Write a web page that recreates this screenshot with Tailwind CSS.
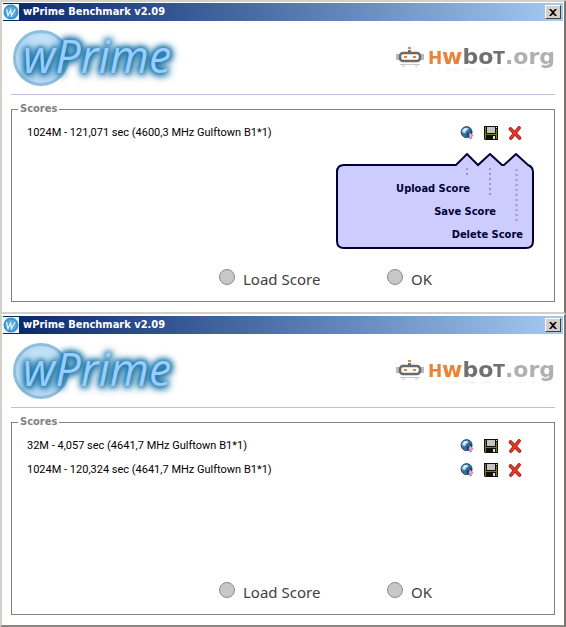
<!DOCTYPE html>
<html lang="en">
<head>
  <meta charset="UTF-8">
  <meta name="viewport" content="width=device-width, initial-scale=1.0">
  <title>wPrime Benchmark v2.09</title>
  <script src="https://cdn.jsdelivr.net/npm/@tailwindcss/browser@4"></script>
</head>
<body class="bg-white text-black font-['DejaVu_Sans_Condensed','DejaVu_Sans',sans-serif]">
  <!-- shared icons -->
  <svg class="hidden">
    <symbol id="app" viewBox="0 0 16 16">
      <rect width="16" height="16" fill="#eef6fc"/>
      <circle cx="8" cy="8" r="7.500" fill="#3f93c8"/>
      <circle cx="8" cy="8" r="5.500" fill="#5aa8d8"/>
      <path d="M3.500 5l1.500 6.500 2.700-5.500.8 5.500 3.700-6.500" fill="none" stroke="#d8efff" stroke-width="1.300"/>
    </symbol>
    <symbol id="close" viewBox="0 0 8 7">
      <path d="M0 0h2l2 2 2-2h2L5 3.500 8 7H6L4 5 2 7H0l3-3.500z" fill="#000"/>
    </symbol>
    <symbol id="robot" viewBox="0 0 28 24">
      <path d="M0 8h3v6H0zM25 8h3v6h-3z" fill="#b8b8b8"/>
      <path d="M12 4h3v3h-3z" fill="#707070"/>
      <path d="M12 1h3v2h-3z" fill="#e08a40"/>
      <rect x="4" y="7" width="20" height="8" rx="3" fill="#fff" stroke="#6a6a6a" stroke-width="2.500"/>
      <path d="M8 10h3v2H8zM17 10h3v2h-3z" fill="#f08028"/>
      <path d="M4 18h20v1H4z" fill="#c8c8c8"/>
      <path d="M6 19h3v2H6zM19 19h3v2h-3z" fill="#e2e2e2"/>
    </symbol>
    <symbol id="globe" viewBox="0 0 16 16">
      <circle cx="7.500" cy="7" r="6.300" fill="#2f6f9f" stroke="#24405c"/>
      <path d="M2 6c1-4 6-5 8-3-1 2-3 2-4 5-1 1-3 0-4-2z" fill="#a9d4ec"/>
      <path d="M4 4c1-1 3-2 4-1L5 6z" fill="#eef9ff"/>
      <path d="M8 9l5-4c1 3 0 6-2 8-2 0-4-2-3-4z" fill="#123a66"/>
      <path d="M11 7l4 4-1.500.5V14l-2 1-1.500-4z" fill="#e2a9d8" stroke="#8d4c86" stroke-width=".6"/>
    </symbol>
    <symbol id="disk" viewBox="0 0 14 14">
      <path d="M0 0h14v14H1l-1-1z" fill="#101008"/>
      <path d="M1 1h1v12H1zM12 3h1v10h-1zM2 8h10v1H2z" fill="#7c7c1c"/>
      <path d="M3 1h8v6H3z" fill="#c4c4c4"/>
      <path d="M12 1h1v1h-1z" fill="#eee"/>
      <path d="M9 10h2v3H9z" fill="#ddd"/>
    </symbol>
    <symbol id="cross" viewBox="0 0 14 14">
      <path d="M2.500 3L11.500 12M11 2L3 12" fill="none" stroke="#8e1208" stroke-width="3.600" stroke-linecap="round"/>
      <path d="M2.500 3L11.500 12M11 2L3 12" fill="none" stroke="#e8382a" stroke-width="2.200" stroke-linecap="round"/>
    </symbol>
  </svg>

  <main>
    <section class="border-2 border-[#d4d0c8] border-r-[#77756f]">
      <header class="mx-px mt-px flex h-[18px] items-center gap-1 bg-linear-to-r from-[#0a246a] to-[#a6caf0] pr-0.5">
        <svg class="size-4"><use href="#app"/></svg>
        <h2 class="grow text-[11px] font-bold text-white">wPrime Benchmark v2.09</h2>
        <button aria-label="Close" class="flex h-3.5 w-4 items-center justify-center border border-white border-r-[#404040] border-b-[#404040] bg-[#d4d0c8]"><svg class="h-[7px] w-2"><use href="#close"/></svg></button>
      </header>
      <div class="px-[9px] pb-2.5">
        <div class="flex h-[74px] items-center justify-between border-b border-[#c0bfdc]">
          <div class="relative h-16 w-44">
            <div class="absolute top-1 left-0.5 size-14 rounded-full border-3 border-[#8fbfdc] bg-radial from-white via-[#c9e4fa] to-[#9fcdec]"></div>
            <p class="absolute top-0.5 left-3 font-['Open_Sans',sans-serif] text-[45px] leading-14 text-[#99ccff] italic [text-shadow:0_0_4px_#1f78a8,0_0_6px_#1f78a8,0_0_8px_#1f78a8,0_0_8px_#1f78a8,1px_2px_8px_#1f78a8]">wPrime</p>
          </div>
          <a href="#" aria-label="hwbot.org" class="flex items-center gap-1">
            <svg class="h-6 w-7"><use href="#robot"/></svg>
            <span class="font-['DejaVu_Sans',sans-serif] text-[22px] leading-6 font-bold text-[#b0b0b0] [-webkit-box-reflect:below_-8px_linear-gradient(transparent_60%,rgb(0_0_0/.25))]"><span class="text-[#e8833a]"><span class="text-[17px]">H</span>w</span><span class="text-[#707070]">bo<span class="text-[17px]">T</span></span>.org</span>
          </a>
        </div>
        <fieldset class="relative mt-[7px] h-[200px] border border-[#808080]">
          <legend class="ml-1.5 px-0.5 text-[11px] leading-3.5 font-bold text-[#808080]">Scores</legend>
          <ul class="h-[153px] pt-[5px] pr-8 pl-[15px] text-[11px]">
            <li class="flex h-6 items-center gap-2.5">
              <span class="grow font-['Roboto',sans-serif]">1024M - 121,071 sec (4600,3 MHz Gulftown B1*1)</span>
              <button aria-label="Upload"><svg class="size-3.5"><use href="#globe"/></svg></button>
              <button aria-label="Save"><svg class="size-3.5"><use href="#disk"/></svg></button>
              <button aria-label="Delete"><svg class="size-3.5"><use href="#cross"/></svg></button>
            </li>
          </ul>
          <!-- hint bubble for the row buttons -->
          <div class="absolute top-[37px] right-5 h-24 w-[198px]">
            <svg viewBox="0 0 198 97" class="absolute inset-0 h-[97px] w-[198px]">
              <path d="M7 12H120L131 1l11 11L154 1l12 11h2L180 1l12 11q5 2 5 7V88q0 7-7 7H8q-7 0-7-7V19q0-7 7-7z" fill="#ccccff" stroke="#000033" stroke-width="2"/>
              <path d="M131 15v7M154 15v27M180.500 16v52" stroke="#9999bb" stroke-width="2" stroke-dasharray="2 3"/>
            </svg>
            <ul class="relative pt-6 text-right text-[11px] leading-[23px] font-bold text-[#000033]">
              <li class="pr-16">Upload Score</li>
              <li class="pr-[38px]">Save Score</li>
              <li class="pr-[11px]">Delete Score</li>
            </ul>
          </div>
          <div class="flex pl-[207px] font-['Noto_Sans',sans-serif] text-[15px] leading-5 text-[#404040]">
            <label class="flex w-42 items-start gap-2"><input type="radio" name="action-1" class="size-4 appearance-none rounded-full border border-[#8a8a8a] bg-[#c8c8c8]">Load Score</label>
            <label class="flex items-start gap-2"><input type="radio" name="action-1" class="size-4 appearance-none rounded-full border border-[#8a8a8a] bg-[#c8c8c8]">OK</label>
          </div>
        </fieldset>
      </div>
    </section>

    <section class="border-2 border-t border-[#d4d0c8] border-t-white border-r-[#77756f] border-b-[#8a8882]">
      <header class="mx-px mt-px flex h-[18px] items-center gap-1 bg-linear-to-r from-[#0a246a] to-[#a6caf0] pr-0.5">
        <svg class="size-4"><use href="#app"/></svg>
        <h2 class="grow text-[11px] font-bold text-white">wPrime Benchmark v2.09</h2>
        <button aria-label="Close" class="flex h-3.5 w-4 items-center justify-center border border-white border-r-[#404040] border-b-[#404040] bg-[#d4d0c8]"><svg class="h-[7px] w-2"><use href="#close"/></svg></button>
      </header>
      <div class="px-[9px] pb-2.5">
        <div class="flex h-[74px] items-center justify-between border-b border-[#c0bfdc]">
          <div class="relative h-16 w-44">
            <div class="absolute top-1 left-0.5 size-14 rounded-full border-3 border-[#8fbfdc] bg-radial from-white via-[#c9e4fa] to-[#9fcdec]"></div>
            <p class="absolute top-0.5 left-3 font-['Open_Sans',sans-serif] text-[45px] leading-14 text-[#99ccff] italic [text-shadow:0_0_4px_#1f78a8,0_0_6px_#1f78a8,0_0_8px_#1f78a8,0_0_8px_#1f78a8,1px_2px_8px_#1f78a8]">wPrime</p>
          </div>
          <a href="#" aria-label="hwbot.org" class="flex items-center gap-1">
            <svg class="h-6 w-7"><use href="#robot"/></svg>
            <span class="font-['DejaVu_Sans',sans-serif] text-[22px] leading-6 font-bold text-[#b0b0b0] [-webkit-box-reflect:below_-8px_linear-gradient(transparent_60%,rgb(0_0_0/.25))]"><span class="text-[#e8833a]"><span class="text-[17px]">H</span>w</span><span class="text-[#707070]">bo<span class="text-[17px]">T</span></span>.org</span>
          </a>
        </div>
        <fieldset class="mt-[7px] h-[200px] border border-[#808080]">
          <legend class="ml-1.5 px-0.5 text-[11px] leading-3.5 font-bold text-[#808080]">Scores</legend>
          <ul class="h-[153px] pt-[5px] pr-8 pl-[15px] text-[11px]">
            <li class="flex h-6 items-center gap-2.5">
              <span class="grow font-['Roboto',sans-serif]">32M - 4,057 sec (4641,7 MHz Gulftown B1*1)</span>
              <button aria-label="Upload"><svg class="size-3.5"><use href="#globe"/></svg></button>
              <button aria-label="Save"><svg class="size-3.5"><use href="#disk"/></svg></button>
              <button aria-label="Delete"><svg class="size-3.5"><use href="#cross"/></svg></button>
            </li>
            <li class="flex h-6 items-center gap-2.5">
              <span class="grow font-['Roboto',sans-serif]">1024M - 120,324 sec (4641,7 MHz Gulftown B1*1)</span>
              <button aria-label="Upload"><svg class="size-3.5"><use href="#globe"/></svg></button>
              <button aria-label="Save"><svg class="size-3.5"><use href="#disk"/></svg></button>
              <button aria-label="Delete"><svg class="size-3.5"><use href="#cross"/></svg></button>
            </li>
          </ul>
          <div class="flex pl-[207px] font-['Noto_Sans',sans-serif] text-[15px] leading-5 text-[#404040]">
            <label class="flex w-42 items-start gap-2"><input type="radio" name="action-2" class="size-4 appearance-none rounded-full border border-[#8a8a8a] bg-[#c8c8c8]">Load Score</label>
            <label class="flex items-start gap-2"><input type="radio" name="action-2" class="size-4 appearance-none rounded-full border border-[#8a8a8a] bg-[#c8c8c8]">OK</label>
          </div>
        </fieldset>
      </div>
    </section>
  </main>
</body>
</html>
